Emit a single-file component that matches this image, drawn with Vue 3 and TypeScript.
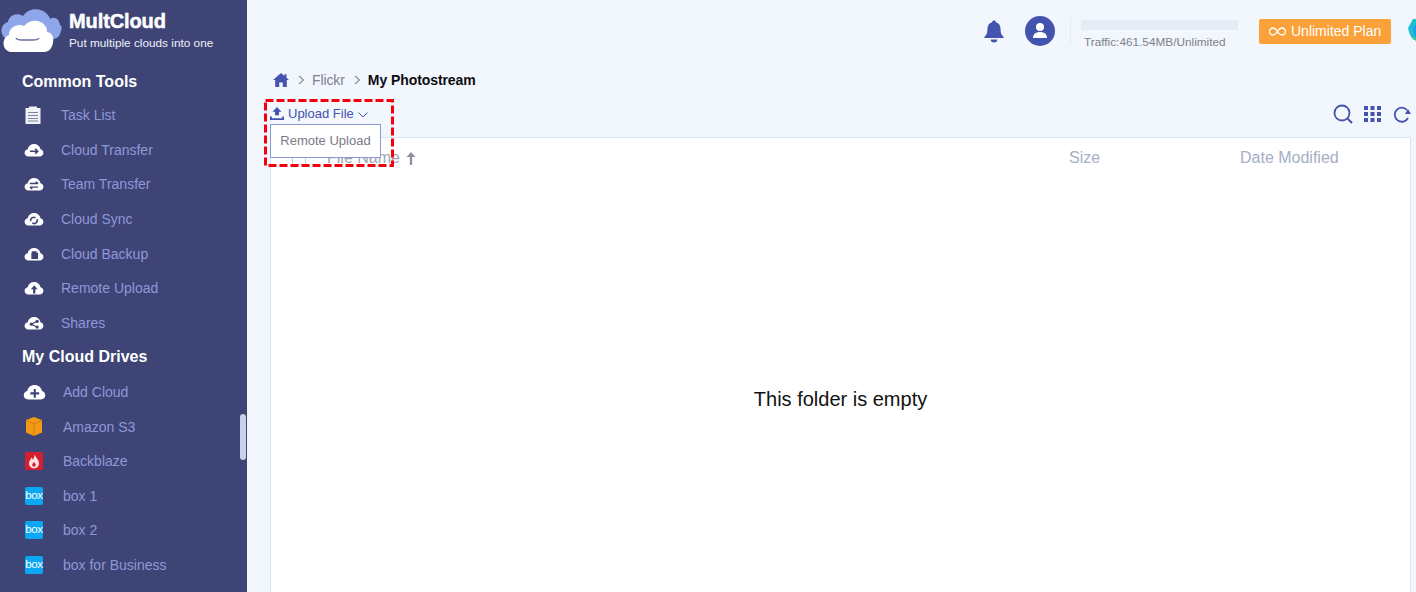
<script setup lang="ts">
interface Item { label: string; icon: string }
const tools: Item[] = [
  { label: 'Task List', icon: 'task' },
  { label: 'Cloud Transfer', icon: 'transfer' },
  { label: 'Team Transfer', icon: 'team' },
  { label: 'Cloud Sync', icon: 'sync' },
  { label: 'Cloud Backup', icon: 'backup' },
  { label: 'Remote Upload', icon: 'upload' },
  { label: 'Shares', icon: 'share' },
]
const drives: Item[] = [
  { label: 'Add Cloud', icon: 'add' },
  { label: 'Amazon S3', icon: 's3' },
  { label: 'Backblaze', icon: 'bb' },
  { label: 'box 1', icon: 'box' },
  { label: 'box 2', icon: 'box' },
  { label: 'box for Business', icon: 'box' },
]
const cloud = 'M4.500 14C2 14 .5 12.300.5 10.200c0-2 1.300-3.500 3.200-3.800C4.400 3 7 1 10.300 1c3.400 0 6 2 6.700 5.400 1.800.4 3 1.900 3 3.800 0 2.100-1.500 3.800-4 3.800z'
</script>

<template>
  <div class="page">
    <aside class="side">
      <div class="brand">
        <svg class="logo" width="62" height="48" viewBox="0 0 62 48">
          <path d="M7 34C-1 31 0 19 8 17c1-7 9-10 15-6 5-8 17-9 24-2 2 2 3 4 3 5 5-3 9 0 10 6 2 1 2 4 1 6-1 5-4 8-8 8z" fill="#8ea6ea" />
          <path d="M11 48C2 47 1 34 9 31c0-8 9-12 15-9 6-7 17-7 22 1 1 2 1 3 1 5 6 1 7 6 6 11-1 5-4 9-9 9z" fill="#fff" transform="translate(0 -1)" />
          <path d="M16 33c1 2 3 2 6 2h11c3 0 5 0 6-2" fill="none" stroke="#666d9c" stroke-width="1.500" />
        </svg>
        <div class="brand-text">
          <div class="brand-name">MultCloud</div>
          <div class="brand-sub">Put multiple clouds into one</div>
        </div>
      </div>
      <h3 class="group first">Common Tools</h3>
      <div v-for="it in tools" :key="it.label" class="row">
        <span class="ico">
          <svg v-if="it.icon === 'task'" width="18" height="18" viewBox="0 0 18 18">
            <path d="M1.500 2H5V.5h8V2h3.500v16h-15z" fill="#f1f2f8" />
            <path d="M4 6.500h10M4 9.500h10M4 12.500h10M4 15h10" stroke="#7d83a6" stroke-width="1.200" />
          </svg>
          <svg v-else class="cloud" width="20" height="14" viewBox="0 0 20.500 14.500">
            <path :d="cloud" fill="#fff" />
            <path v-if="it.icon === 'transfer'" d="M6 8.500h8m-2.500-2.500 2.500 2.500-2.500 2.500" fill="none" stroke="#3e4475" stroke-width="1.700" />
            <path v-if="it.icon === 'team'" d="M6 6.800h8m-2-1.800 2.500 1.800M14.500 10.500h-8m2 1.800-2.500-1.800" fill="none" stroke="#3e4475" stroke-width="1.500" />
            <path v-if="it.icon === 'sync'" d="M6.800 9.500a3.300 3.300 0 0 1 5-3.500M13.500 7.500a3.300 3.300 0 0 1-5 3.800" fill="none" stroke="#3e4475" stroke-width="1.700" />
            <path v-if="it.icon === 'backup'" d="M8 4.500h5V6h1.500v6.500H7.500V6H8z" fill="#3e4475" />
            <path v-if="it.icon === 'upload'" d="M10.500 4.500L7 8.500h2.300V13h2.400V8.500H14z" fill="#3e4475" />
            <g v-if="it.icon === 'share'" fill="#3e4475">
              <circle cx="13.500" cy="5.500" r="1.700" /><circle cx="13.500" cy="11.500" r="1.700" /><circle cx="7.500" cy="8.500" r="1.700" />
              <path d="M13.500 5.500l-6 3 6 3" fill="none" stroke="#3e4475" stroke-width="1.200" />
            </g>
          </svg>
        </span>
        <span>{{ it.label }}</span>
      </div>
      <h3 class="group">My Cloud Drives</h3>
      <div v-for="it in drives" :key="it.label" class="row drive">
        <span class="ico">
          <svg v-if="it.icon === 'add'" width="23" height="16" viewBox="0 0 20.500 14.500">
            <path :d="cloud" fill="#fff" />
            <path d="M10.500 4.500v8M6.500 8.500h8" stroke="#3e4475" stroke-width="1.900" />
          </svg>
          <svg v-else-if="it.icon === 's3'" width="18" height="19" viewBox="0 0 18 19">
            <path d="M9 0l8 3v12.500L9 19l-8-3.500V3z" fill="#f29a13" />
            <path d="M1.300 3.600L9 6.800l7.700-3.200M9 6.800V19" fill="none" stroke="#c97a0c" stroke-width=".9" />
          </svg>
          <svg v-else-if="it.icon === 'bb'" width="18" height="18" viewBox="0 0 18 18">
            <rect width="18" height="18" rx="1.500" fill="#d3202f" />
            <path d="M9.500 2.500c1 3 4.500 5 4.500 9a5 5 0 0 1-10 0c0-3 2-4 2.500-6 .8.800 1.200 1.500 1.300 2.500C8.800 6.500 9.500 5 9.500 2.500z" fill="#fbe3e3" />
            <path d="M9 10c.8 1.200 1.800 1.800 1.800 3a1.800 1.800 0 0 1-3.600 0c0-1.200 1-1.800 1.800-3z" fill="#d3202f" />
          </svg>
          <span v-else class="box">box</span>
        </span>
        <span>{{ it.label }}</span>
      </div>
      <div class="thumb"></div>
    </aside>

    <main class="main">
      <header class="top">
        <svg width="22" height="24" viewBox="0 0 22 24" class="bell">
          <path d="M11 1.500c1.200 0 1.800.7 1.900 1.700 3.300.9 4.700 3.600 4.700 7.300 0 4 1 5.300 2.900 7.200v1.300h-19v-1.300c1.900-1.900 2.900-3.200 2.900-7.200 0-3.700 1.400-6.400 4.700-7.300.1-1 .7-1.700 1.900-1.700z" fill="#4453ad" />
          <path d="M7.700 20.500h6.600a3.300 3 0 0 1-6.600 0z" fill="#4453ad" />
        </svg>
        <svg width="30" height="30" viewBox="0 0 30 30" class="avatar">
          <circle cx="15" cy="15" r="15" fill="#4453ad" />
          <circle cx="15" cy="11" r="4" fill="#fff" />
          <path d="M8 22c0-4 3-6 7-6s7 2 7 6z" fill="#fff" />
        </svg>
        <div class="sep"></div>
        <div class="traffic">
          <div class="bar"></div>
          <div class="traffic-text">Traffic:461.54MB/Unlimited</div>
        </div>
        <div class="plan">
          <svg width="17" height="9" viewBox="0 0 17 9"><path d="M8.500 4.500C7 2 5.700 1 4 1a3.500 3.500 0 0 0 0 7c1.700 0 3-1 4.500-3.500S11.300 1 13 1a3.500 3.500 0 0 1 0 7c-1.700 0-3-1-4.500-3.500z" fill="none" stroke="#fff" stroke-width="1.300" /></svg>
          Unlimited Plan
        </div>
        <svg class="globe" width="9" height="24" viewBox="0 0 9 24">
          <path d="M0 9l5-9h4v21H6C3 19 1 14 0 9z" fill="#1dbfd0" />
          <path d="M5 8l4-3v16c-2-3-4-8-4-13z" fill="#1b9df0" />
          <path d="M4 17l5 7v-4z" fill="#5cc47a" />
        </svg>
      </header>

      <nav class="crumbs">
        <svg width="16" height="14" viewBox="0 0 16 14"><path d="M8 0L0 7h2.200v7h4V9.500h3.600V14h4V7H16l-2.500-2.200V1.200h-2v1.800z" fill="#4453ad" /></svg>
        <svg class="chev" width="7" height="10" viewBox="0 0 7 10"><path d="M1 1l4.500 4L1 9" fill="none" stroke="#8a8fa5" stroke-width="1.200" /></svg>
        <span class="crumb">Flickr</span>
        <svg class="chev" width="7" height="10" viewBox="0 0 7 10"><path d="M1 1l4.500 4L1 9" fill="none" stroke="#8a8fa5" stroke-width="1.200" /></svg>
        <strong class="current">My Photostream</strong>
      </nav>

      <div class="toolbar">
        <div class="up">
          <svg width="14" height="13" viewBox="0 0 14 13"><path d="M7 0l4.500 4.800H9v3.400H5V4.800H2.500zM0 9.500h1.800v1.700h10.400V9.500H14V13H0z" fill="#4453ad" /></svg>
          <span>Upload File</span>
          <svg width="10" height="6" viewBox="0 0 10 6"><path d="M.5.500L5 5 9.500.5" fill="none" stroke="#4453ad" /></svg>
        </div>
        <div class="tools">
          <svg class="find" width="20" height="20" viewBox="0 0 20 20"><circle cx="9" cy="9" r="7.500" fill="none" stroke="#4453ad" stroke-width="1.800" /><path d="M14.500 14.500L19 19" stroke="#4453ad" stroke-width="2" /></svg>
          <svg width="17" height="16" viewBox="0 0 17 16" fill="#4453ad">
            <rect width="4" height="4" /><rect x="6.500" width="4" height="4" /><rect x="13" width="4" height="4" />
            <rect y="6" width="4" height="4" /><rect x="6.500" y="6" width="4" height="4" /><rect x="13" y="6" width="4" height="4" />
            <rect y="12" width="4" height="4" /><rect x="6.500" y="12" width="4" height="4" /><rect x="13" y="12" width="4" height="4" />
          </svg>
          <svg width="18" height="17" viewBox="0 0 18 17"><path d="M15 12a7 7 0 1 1-1-8" fill="none" stroke="#4453ad" stroke-width="1.800" /><path d="M18 8h-6l3-5z" fill="#4453ad" /></svg>
        </div>
      </div>

      <section class="table">
        <div class="thead">
          <span class="check"></span>
          <span class="c-name">
            File Name
            <svg class="arrow" width="10" height="13" viewBox="0 0 10 13"><path d="M5 0L9.500 5H6.200v8H3.800V5H.5z" fill="#8d91a5" /></svg>
          </span>
          <span class="c-size">Size</span>
          <span class="c-date">Date Modified</span>
        </div>
        <div class="empty">This folder is empty</div>
      </section>

      <div class="menu">Remote Upload</div>
      <svg class="mark" width="130" height="68" viewBox="0 0 130 68">
        <rect x="1.500" y="1.500" width="127" height="65" fill="none" stroke="#f4000f" stroke-width="3" stroke-dasharray="8 3" />
      </svg>
    </main>
  </div>
</template>

<style>
html, body { margin: 0; overflow: hidden; }
</style>

<style scoped>
.page { display: flex; width: 1416px; height: 592px; overflow: hidden; font-family: "Liberation Sans", Arial, sans-serif; background: #f2f6fd; }
.side { position: relative; flex: 0 0 247px; height: 592px; background: #3e4475; overflow: hidden; }
.brand { display: flex; height: 63.300px; box-sizing: border-box; padding: 5px 0 0 0; }
.logo { flex: none; }
.brand-text { margin-left: 7px; }
.brand-name { font-size: 20px; font-weight: 700; color: #fff; line-height: 24px; margin-top: 4px; letter-spacing: -.1px; -webkit-text-stroke: .5px #fff; }
.brand-sub { font-size: 11.800px; color: #eef0fa; line-height: 14px; margin-top: 3px; }
.group { margin: 0; box-sizing: border-box; height: 34.600px; line-height: 32.600px; padding: 1px 0 0 22px; font-size: 16px; font-weight: 700; color: #fff; }
.first { padding-top: 3px; }
.row { display: flex; align-items: center; height: 34.600px; color: #8e98d8; font-size: 14px; }
.ico { flex: none; width: 22px; margin: 0 17px 0 22px; display: flex; justify-content: center; }
.cloud { margin-left: 1px; }
.drive .ico { width: 24px; margin: 0 17px 0 22px; }
.box { width: 18px; height: 18px; border-radius: 2px; background: #0aa8f2; color: #fff; font-size: 11.500px; line-height: 17px; text-align: center; letter-spacing: -.4px; }
.thumb { position: absolute; left: 240px; top: 414px; width: 6px; height: 46px; border-radius: 3px; background: #c9d1ea; }

.main { position: relative; flex: 1; min-width: 0; overflow: hidden; }
.top { display: flex; align-items: center; height: 62px; }
.bell { margin-left: 736px; flex: none; }
.avatar { margin-left: 20px; flex: none; }
.sep { width: 1px; height: 28px; margin-left: 15px; background: #e6ecf6; flex: none; }
.traffic { margin-left: 10px; width: 178px; flex: none; padding-top: 7px; }
.bar { width: 157px; height: 10px; background: #e6ebf5; }
.traffic-text { font-size: 11.800px; color: #7f808a; margin-top: 5px; line-height: 14px; margin-left: 3px; }
.plan { display: flex; align-items: center; gap: 5px; flex: none; width: 132px; height: 25px; box-sizing: border-box; padding-left: 10px; background: #fba13a; border-radius: 2px; color: #fff; font-size: 14px; }
.globe { flex: none; margin-left: 17px; }

.crumbs { display: flex; align-items: center; height: 36px; padding-left: 26px; }
.chev { margin: 0 8px 0 9px; }
.chev:nth-of-type(2) { margin-right: 7px; }
.crumb { font-size: 14px; color: #7e8194; letter-spacing: -.1px; }
.current { font-size: 14px; color: #0d0d10; letter-spacing: -.08px; margin-left: -1px; }

.toolbar { display: flex; align-items: center; justify-content: space-between; height: 34px; padding: 0 5px 0 23px; margin-top: -1px; }
.up { display: flex; align-items: center; gap: 4px; color: #4453ad; font-size: 13px; margin-top: -1px; }
.up svg:last-child { margin-left: 0; margin-top: 3px; }
.tools { display: flex; align-items: center; gap: 12px; }
.find { margin-right: -1px; }

.table { margin: 6px 5px 0 23px; height: 500px; background: #fff; border: 1px solid #dbe5f3; }
.thead { display: flex; align-items: center; height: 38px; color: #a5aec6; font-size: 16px; margin-top: 1px; }
.check { width: 12px; height: 12px; border: 1px solid #c9cfdc; margin-left: 21px; flex: none; }
.c-name { margin-left: 21px; width: 742px; color: #a1a4b4; display: flex; align-items: center; gap: 6px; }
.c-size { width: 171px; }
.empty { text-align: center; font-size: 20px; color: #111; margin-top: 210px; line-height: 24px; }

.menu { position: absolute; left: 23px; top: 124px; width: 111px; height: 34px; box-sizing: border-box; line-height: 32px; text-align: center; background: #fff; border: 1px solid #8e98d8; color: #7b7a88; font-size: 13px; }
.mark { position: absolute; left: 17px; top: 99px; }
</style>
